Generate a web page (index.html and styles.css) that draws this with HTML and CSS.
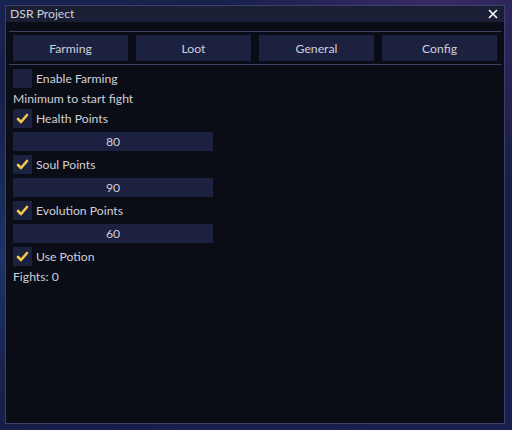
FILE: index.html
```html
<!DOCTYPE html>
<html lang="en">
<head>
  <meta charset="UTF-8">
  <title>DSR Project</title>
  <link rel="stylesheet" href="styles.css">
</head>
<body>
  <div class="window">
    <div class="titlebar">
      <span class="title">DSR Project</span>
      <svg class="close" viewBox="0 0 10 10" width="10" height="10"><path d="M1 1 L9 9 M9 1 L1 9" /></svg>
    </div>
    <div class="content">
      <div class="separator first"></div>
      <div class="tabs">
        <div class="tab">Farming</div>
        <div class="tab">Loot</div>
        <div class="tab">General</div>
        <div class="tab">Config</div>
      </div>
      <div class="separator"></div>
      <div class="rows">
        <div class="check-row">
          <span class="box"></span>
          <span class="label">Enable Farming</span>
        </div>
        <div class="text">Minimum to start fight</div>
        <div class="check-row">
          <span class="box"><svg viewBox="0 0 19 19" width="19" height="19"><path d="M5 10 L8 13 L14 6" /></svg></span>
          <span class="label">Health Points</span>
        </div>
        <div class="slider">80</div>
        <div class="check-row">
          <span class="box"><svg viewBox="0 0 19 19" width="19" height="19"><path d="M5 10 L8 13 L14 6" /></svg></span>
          <span class="label">Soul Points</span>
        </div>
        <div class="slider">90</div>
        <div class="check-row">
          <span class="box"><svg viewBox="0 0 19 19" width="19" height="19"><path d="M5 10 L8 13 L14 6" /></svg></span>
          <span class="label">Evolution Points</span>
        </div>
        <div class="slider">60</div>
        <div class="check-row">
          <span class="box"><svg viewBox="0 0 19 19" width="19" height="19"><path d="M5 10 L8 13 L14 6" /></svg></span>
          <span class="label">Use Potion</span>
        </div>
        <div class="text">Fights: 0</div>
      </div>
    </div>
  </div>
</body>
</html>
```
FILE: styles.css
```css
body {
  margin: 0;
  width: 512px;
  height: 430px;
  overflow: hidden;
  font-family: Lato, "Open Sans", sans-serif;
  font-size: 12.2px;
  color: #cfd0da;
  background:
    radial-gradient(ellipse at 85% 0%, #3a2a66 0%, rgba(58, 42, 102, 0) 35%),
    radial-gradient(ellipse at 0% 60%, #1d3266 0%, rgba(29, 50, 102, 0) 45%),
    linear-gradient(160deg, #17224e 0%, #141c42 50%, #1a2050 100%);
}
.window {
  margin: 5px 0 0 5px;
  width: 500px;
  height: 419px;
  box-sizing: border-box;
  border: 1px solid #3a3f6c;
  background: #0b0d16;
  display: flex;
  flex-direction: column;
}
.titlebar {
  height: 16px;
  background: #1b1f35;
  display: flex;
  align-items: center;
  justify-content: space-between;
  padding: 0 6px 0 4px;
}
.title {
  line-height: 16px;
}
.close {
  display: block;
  fill: none;
  stroke: #f4f4f8;
  stroke-width: 1.7;
}
.content {
  padding: 0 7px;
}
.separator {
  height: 1px;
  background: #3a3f66;
  margin: 3px -4px 0;
}
.separator.first {
  margin-top: 9px;
}
.tabs {
  margin-top: 3px;
  display: grid;
  grid-template-columns: repeat(4, 1fr);
  gap: 8px;
}
.tab {
  height: 26px;
  background: #1d2140;
  display: flex;
  align-items: center;
  justify-content: center;
}
.rows {
  margin-top: 4px;
  display: flex;
  flex-direction: column;
  gap: 4px;
}
.check-row {
  height: 19px;
  display: flex;
  align-items: center;
  gap: 4px;
}
.box {
  width: 19px;
  height: 19px;
  background: #1d2140;
}
.box svg {
  display: block;
  fill: none;
  stroke: #f2c84b;
  stroke-width: 2.6;
  stroke-linecap: round;
  stroke-linejoin: round;
}
.text {
  line-height: 13px;
}
.slider {
  width: 200px;
  height: 19px;
  background: #1d2140;
  display: flex;
  align-items: center;
  justify-content: center;
}
```
